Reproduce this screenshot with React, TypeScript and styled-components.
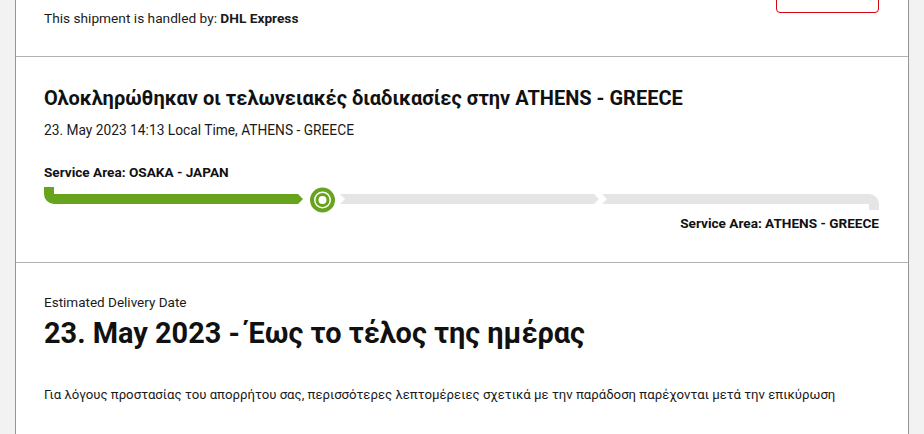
import React from "react";
import styled, { createGlobalStyle } from "styled-components";

const Global = createGlobalStyle`
  html, body { margin: 0; padding: 0; background: #f2f2f2; }
  body { font-family: Roboto, "Noto Sans", sans-serif; color: #1a1a1a; }
  * { box-sizing: border-box; }
`;

const Panel = styled.div`
  margin: 0 15px;
  background: #fff;
  border-left: 1px solid #959595;
  border-right: 1px solid #959595;
  min-height: 434px;
`;

const Section = styled.section<{ $h: number; $pt: number }>`
  height: ${(p) => p.$h}px;
  padding: ${(p) => p.$pt}px 29px 0 28px;
  border-bottom: 1px solid #b3b3b3;
  display: flex;
  flex-direction: column;
  &:last-child { border-bottom: none; }
`;

const TopRow = styled.div`
  display: flex;
  justify-content: space-between;
  align-items: flex-start;
`;

const Handled = styled.p`
  margin: 9px 0 0;
  font-size: 13.7px;
  line-height: 18px;
  color: #1a1a1a;
  b { font-weight: 700; }
`;

const OutlineButton = styled.button`
  width: 103px;
  height: 40px;
  margin-top: -27px;
  border: 1px solid #d40511;
  border-radius: 4px;
  background: #fff;
`;

const Title = styled.h2`
  margin: 0;
  font-size: 20px;
  line-height: 24px;
  font-weight: 700;
  color: #111;
`;

const Meta = styled.p`
  margin: 11px 0 0;
  font-size: 13.75px;
  line-height: 18px;
`;

const AreaLabel = styled.div<{ $right?: boolean; $mt?: number }>`
  margin-top: ${(p) => p.$mt ?? 0}px;
  font-size: 13.6px;
  line-height: 18px;
  font-weight: 700;
  color: #111;
  text-align: ${(p) => (p.$right ? "right" : "left")};
`;

const Track = styled.svg`
  display: block;
  width: 835px;
  height: 27px;
  margin-top: 6px;
`;

const Small = styled.p`
  margin: 1px 0 0;
  font-size: 13.5px;
  line-height: 18px;
`;

const BigDate = styled.h1`
  margin: 4px 0 0;
  font-size: 28.9px;
  line-height: 36px;
  font-weight: 700;
  color: #111;
`;

const Note = styled.p`
  margin: 35px 0 0;
  font-size: 13.2px;
  line-height: 18px;
`;

const GREEN = "#68a31e";
const GREY = "#e5e5e5";

function ProgressTrack() {
  return (
    <Track viewBox="0 0 835 27">
      <path d="M0 0 H10 V7 H254 L259 12 L254 17 H10 A10 10 0 0 1 0 7 Z" fill={GREEN} />
      <circle cx="278.5" cy="13" r="10.5" fill="none" stroke={GREEN} strokeWidth="4" />
      <circle cx="278.5" cy="13" r="5.5" fill="none" stroke={GREEN} strokeWidth="3" />
      <path d="M296 7 H550 L555 12 L550 17 H296 L301 12 Z" fill={GREY} />
      <path d="M558 7 H825 A10 10 0 0 1 835 17 V23 H825 V17 H558 L563 12 Z" fill={GREY} />
    </Track>
  );
}

export default function App() {
  return (
    <>
      <Global />
      <Panel>
        <Section $h={57} $pt={0}>
          <TopRow>
            <Handled>
              This shipment is handled by: <b>DHL Express</b>
            </Handled>
            <OutlineButton aria-label="more" />
          </TopRow>
        </Section>
        <Section $h={206} $pt={29}>
          <Title>Ολοκληρώθηκαν οι τελωνειακές διαδικασίες στην ATHENS - GREECE</Title>
          <Meta>23. May 2023 14:13 Local Time, ATHENS - GREECE</Meta>
          <AreaLabel $mt={24}>Service Area: OSAKA - JAPAN</AreaLabel>
          <ProgressTrack />
          <AreaLabel $right>Service Area: ATHENS - GREECE</AreaLabel>
        </Section>
        <Section $h={172} $pt={29}>
          <Small>Estimated Delivery Date</Small>
          <BigDate>23. May 2023 - Έως το τέλος της ημέρας</BigDate>
          <Note>
            Για λόγους προστασίας του απορρήτου σας, περισσότερες λεπτομέρειες σχετικά με την παράδοση παρέχονται μετά την επικύρωση
          </Note>
        </Section>
      </Panel>
    </>
  );
}
